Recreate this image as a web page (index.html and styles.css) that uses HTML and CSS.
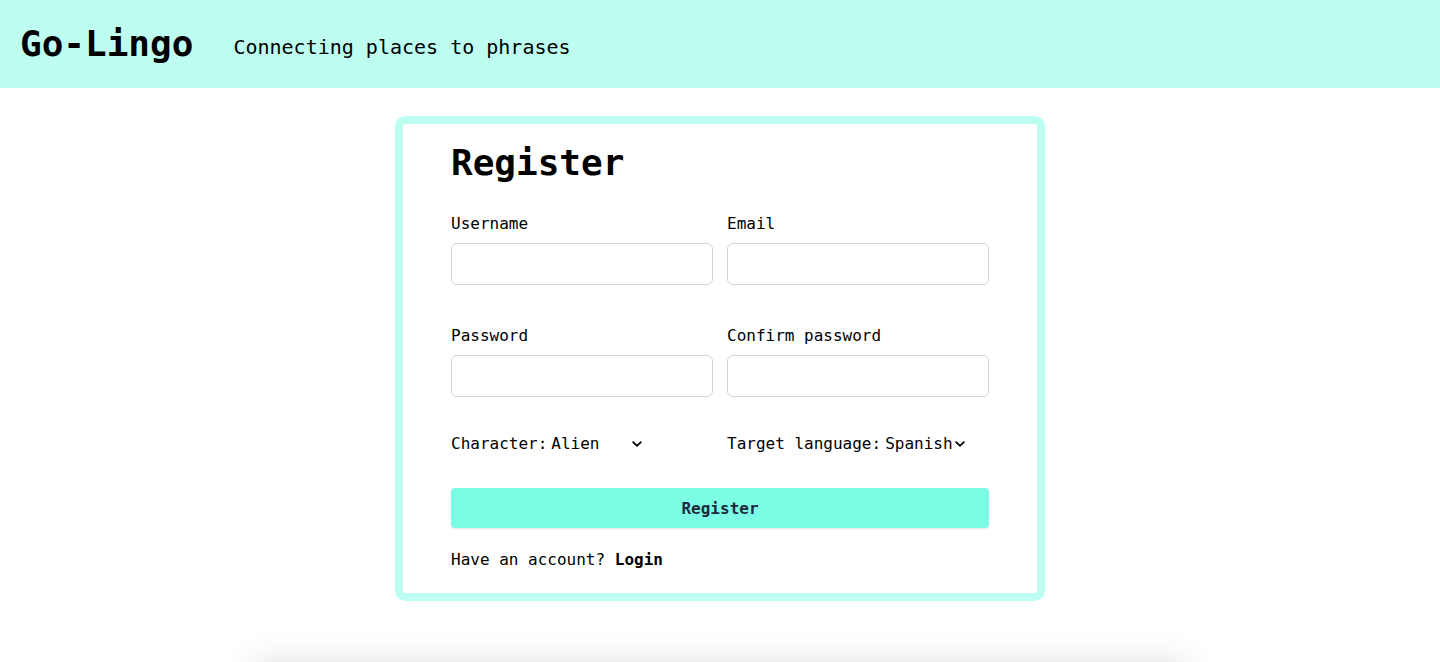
FILE: index.html
```html
<!DOCTYPE html>
<html lang="en">
<head>
<meta charset="utf-8">
<title>Go-Lingo</title>
<link rel="stylesheet" href="styles.css">
</head>
<body>
<header class="topbar">
  <h1 class="brand">Go-Lingo</h1>
  <p class="tagline">Connecting places to phrases</p>
</header>
<main class="page">
  <section class="card">
    <h2 class="card-title">Register</h2>
    <form class="form">
      <div class="field">
        <label class="field-label" for="username">Username</label>
        <input class="field-input" id="username" type="text">
      </div>
      <div class="field">
        <label class="field-label" for="email">Email</label>
        <input class="field-input" id="email" type="email">
      </div>
      <div class="field">
        <label class="field-label" for="password">Password</label>
        <input class="field-input" id="password" type="password">
      </div>
      <div class="field">
        <label class="field-label" for="confirm">Confirm password</label>
        <input class="field-input" id="confirm" type="password">
      </div>
      <div class="pick">
        <label class="pick-label" for="character">Character:</label>
        <span class="select-wrap">
          <select class="pick-select sel-char" id="character">
            <option>Alien</option>
            <option>Robot</option>
          </select>
          <svg class="chev" viewBox="0 0 10 6" width="10" height="6" aria-hidden="true"><path d="M1.2 1.2 L5 4.8 L8.8 1.2" fill="none" stroke="#000" stroke-width="1.8" stroke-linecap="round" stroke-linejoin="round"/></svg>
        </span>
      </div>
      <div class="pick">
        <label class="pick-label" for="language">Target language:</label>
        <span class="select-wrap">
          <select class="pick-select sel-lang" id="language">
            <option>Spanish</option>
            <option>French</option>
          </select>
          <svg class="chev" viewBox="0 0 10 6" width="10" height="6" aria-hidden="true"><path d="M1.2 1.2 L5 4.8 L8.8 1.2" fill="none" stroke="#000" stroke-width="1.8" stroke-linecap="round" stroke-linejoin="round"/></svg>
        </span>
      </div>
      <button class="submit" type="button">Register</button>
    </form>
    <p class="switch">Have an account? <a class="switch-link" href="#">Login</a></p>
  </section>
  <div class="below"></div>
</main>
</body>
</html>
```

FILE: styles.css
```css
* {
  box-sizing: border-box;
}

html, body {
  margin: 0;
  padding: 0;
  background: #ffffff;
}

body {
  font-family: "DejaVu Sans Mono", monospace;
  color: #000000;
  overflow: hidden;
}

.topbar {
  height: 88px;
  background: #befef0;
  display: flex;
  align-items: center;
  padding-left: 20px;
}

.brand {
  margin: 0 40px 0 0;
  font-size: 36px;
  font-weight: bold;
  line-height: 42px;
}

.tagline {
  margin: 6px 0 0 0;
  font-size: 20px;
  line-height: 24px;
}

.page {
  display: flex;
  flex-direction: column;
  align-items: center;
  padding-top: 28px;
}

.card {
  width: 650px;
  border: 8px solid #befef0;
  border-radius: 10px;
  padding: 18px 48px 24px 48px;
  background: #ffffff;
}

.card-title {
  margin: 0 0 30px 0;
  font-size: 36px;
  font-weight: bold;
  line-height: 42px;
}

.form {
  display: grid;
  grid-template-columns: 1fr 1fr;
  column-gap: 14px;
  row-gap: 41px;
}

.field {
  display: flex;
  flex-direction: column;
  gap: 10px;
}

.field-label {
  font-size: 16px;
  line-height: 19px;
}

.field-input {
  height: 42px;
  width: 100%;
  border: 1px solid #d1d5db;
  border-radius: 6px;
  background: #ffffff;
  font-family: inherit;
  font-size: 16px;
  padding: 0 10px;
  outline: none;
}

.pick {
  display: flex;
  align-items: center;
  height: 19px;
  margin-top: -4px;
  font-size: 16px;
  line-height: 19px;
}

.select-wrap {
  position: relative;
  display: inline-flex;
  align-items: center;
}

.pick-select {
  appearance: none;
  -webkit-appearance: none;
  border: 0;
  background: transparent;
  font-family: inherit;
  font-size: 16px;
  line-height: 19px;
  color: #000000;
  padding: 0 0 0 4px;
  margin: 0;
  height: 19px;
  outline: none;
}

.sel-char {
  width: 96px;
}

.sel-lang {
  width: 85px;
}

.chev {
  position: absolute;
  right: 1px;
  top: 7px;
  pointer-events: none;
}

.submit {
  grid-column: 1 / span 2;
  margin-top: -6px;
  height: 40px;
  border: 0;
  border-radius: 4px;
  background: #7cfce4;
  box-shadow: 0 1px 2px rgba(0, 0, 0, 0.12);
  font-family: inherit;
  font-size: 16px;
  font-weight: bold;
  color: #1e293b;
  cursor: pointer;
}

.switch {
  margin: 22px 0 0 0;
  font-size: 16px;
  line-height: 19px;
}

.switch-link {
  color: #000000;
  font-weight: bold;
  text-decoration: none;
}

.below {
  width: 920px;
  height: 200px;
  margin-top: 70px;
  background: #ffffff;
  box-shadow: 0 0 34px 4px rgba(0, 0, 0, 0.18);
}
```
